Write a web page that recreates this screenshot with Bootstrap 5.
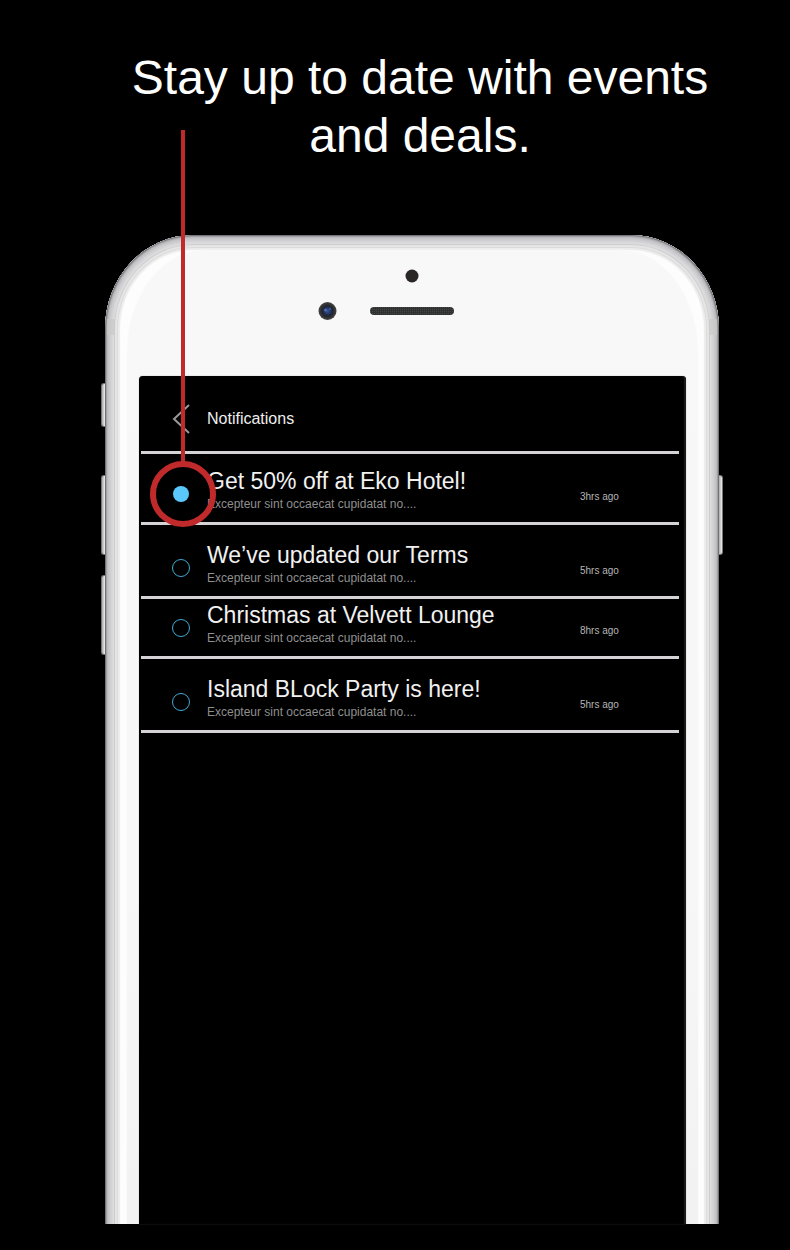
<!DOCTYPE html>
<html lang="en">
<head>
<meta charset="utf-8">
<meta name="viewport" content="width=device-width, initial-scale=1">
<title>Notifications</title>
<link href="https://cdn.jsdelivr.net/npm/bootstrap@5.3.0/dist/css/bootstrap.min.css" rel="stylesheet">
<style>
  body { background: #000; color: #fff; font-family: "Liberation Sans", Arial, sans-serif; }
  .headline { font-size: 48px; line-height: 58px; padding: 49px 0 0 50px; margin-bottom: 70px; }
  .headline span { display: block; }
  .stage { padding: 0 71px 26px 105px; }

  /* phone body */
  .phone { padding: 141px 33px 0 34px; }
  .shell { inset: 0; }
  .shell-rim {
    inset: 0 0 -60px 0;
    border-radius: 88px 88px 0 0 / 94px 94px 0 0;
    background: #fdfdfd;
    box-shadow:
      inset 0 0 2px 1px #5c5c60,
      inset 0 0 4px 4px #b9b9bd,
      inset 0 0 3px 7px #d6d6d9,
      inset 0 0 0 9px #dedee0,
      inset 0 0 0 10px #cdcfcf,
      inset 0 0 0 12px #e5e5e6,
      inset 0 0 0 13px #dcdcdd,
      inset 0 0 1px 15px #ececec;
  }
  .shell-face {
    inset: 15px 21px -60px 22px;
    border-radius: 78px 78px 0 0 / 104px 104px 0 0;
    background: linear-gradient(#f8f8f8, #f7f7f7 60%, #f1f1f1);
    box-shadow: 0 0 2px #f8f8f8;
  }
  .antenna { top: 84px; width: 8px; height: 16px; background: #c9c9c8; opacity: .7; }
  .antenna-l { left: 2px; }
  .antenna-r { right: 2px; }
  .side-key {
    width: 4px; border: 1px solid #77777a; border-radius: 3px 0 0 3px;
    background: linear-gradient(90deg, #aaa, #efefef);
  }
  .key-l { left: -4px; border-right: 0; }
  .key-r { right: -4px; border-left: 0; border-radius: 0 3px 3px 0; }
  .key-mute { top: 148px; height: 44px; }
  .key-up { top: 240px; height: 80px; }
  .key-down { top: 340px; height: 80px; }
  .sensors { inset: 32px 0 auto 0; height: 56px; }

  /* screen */
  .screen {
    background: #000; border-radius: 4px 4px 0 0; padding: 0 7px 0 2px;
    box-shadow: inset -2px 0 1px #1d1d1c, 0 0 1px #777;
  }
  .topbar { height: 75px; padding: 10px 0 0 31px; gap: 16px; }
  .back { width: 19px; height: 30px; color: #999; background: none; border: 0; }
  .topbar h2 { font-size: 16px; line-height: 20px; margin: 0; color: #eee; font-weight: 400; }
  .notice-list { border-top: 3px solid #d5d3d5; }
  .notice { border-bottom: 3px solid #d5d3d5; padding: 13px 0 9px 31px; }
  .notice-roomy { padding-top: 16px; }
  .notice-tight { padding-top: 2px; }
  .notice h3 { font-size: 23px; line-height: 28px; margin: 0; color: #f1f1f1; font-weight: 400; }
  .notice p { font-size: 12px; line-height: 18px; margin: 0; color: #8f8f8f; }
  .notice time { font-size: 10px; line-height: 12px; color: #b5b5b5; width: 99px; padding-top: 24px; }
  .dot { width: 18px; height: 18px; border: 1px solid #43a8d4; margin: 18px 17px 0 0; }
  .dot-new { width: 16px; height: 16px; background: #5ac8fa; border: 0; margin: 19px 18px 0 1px; }

  /* callout */
  .callout { width: 66px; height: 66px; border: 6px solid #c12a2a; left: -23px; top: -25px; z-index: 2; }
  .callout::before {
    content: ""; width: 4px; height: 333px; background: #c12a2a;
    position: absolute; left: 25px; bottom: 58px;
  }
</style>
</head>
<body>
<main class="min-vh-100 d-flex flex-column">
  <h1 class="headline text-center fw-normal"><span>Stay up to date with events</span><span>and deals.</span></h1>
  <div class="stage flex-grow-1 d-flex">
    <div class="phone position-relative flex-grow-1 d-flex">
      <div class="side-key key-l key-mute position-absolute"></div>
      <div class="side-key key-l key-up position-absolute"></div>
      <div class="side-key key-l key-down position-absolute"></div>
      <div class="side-key key-r key-up position-absolute"></div>
      <div class="shell position-absolute overflow-hidden">
        <div class="shell-rim position-absolute"></div>
        <div class="shell-face position-absolute"></div>
        <div class="antenna antenna-l position-absolute"></div>
        <div class="antenna antenna-r position-absolute"></div>
        <div class="sensors position-absolute d-flex justify-content-center">
          <svg width="240" height="56" viewBox="0 0 240 56" aria-hidden="true">
            <defs>
              <radialGradient id="lens"><stop offset="0" stop-color="#38569b"/><stop offset=".45" stop-color="#1d2b50"/><stop offset=".6" stop-color="#25262a"/><stop offset="1" stop-color="#454545"/></radialGradient>
              <pattern id="mesh" width="2" height="2" patternUnits="userSpaceOnUse"><rect width="2" height="2" fill="#303231"/><rect width="1" height="1" fill="#454746"/></pattern>
            </defs>
            <circle cx="120" cy="9" r="6.5" fill="#292625"/>
            <circle cx="35.500" cy="44" r="9" fill="url(#lens)"/>
            <circle cx="33.500" cy="43" r="1.500" fill="#4b6db4"/>
            <circle cx="38" cy="42" r="1" fill="#48639f"/>
            <rect x="78" y="40" width="84" height="8" rx="4" fill="url(#mesh)"/>
          </svg>
        </div>
      </div>
      <section class="screen position-relative flex-grow-1">
        <header class="topbar d-flex align-items-center">
          <button type="button" class="back p-0 d-flex" aria-label="Back">
            <svg width="19" height="30" viewBox="0 0 19 30" fill="none" stroke="currentColor" stroke-width="2"><path d="M17 1 2 15 17 29"/></svg>
          </button>
          <h2>Notifications</h2>
        </header>
        <ul class="notice-list list-unstyled m-0">
          <li class="notice d-flex">
            <div class="dot dot-new rounded-circle flex-shrink-0 position-relative"><span class="callout position-absolute rounded-circle"></span></div>
            <div class="flex-grow-1"><h3>Get 50% off at Eko Hotel!</h3><p>Excepteur sint occaecat cupidatat no....</p></div>
            <time>3hrs ago</time>
          </li>
          <li class="notice notice-roomy d-flex">
            <div class="dot rounded-circle flex-shrink-0"></div>
            <div class="flex-grow-1"><h3>We’ve updated our Terms</h3><p>Excepteur sint occaecat cupidatat no....</p></div>
            <time>5hrs ago</time>
          </li>
          <li class="notice notice-tight d-flex">
            <div class="dot rounded-circle flex-shrink-0"></div>
            <div class="flex-grow-1"><h3>Christmas at Velvett Lounge</h3><p>Excepteur sint occaecat cupidatat no....</p></div>
            <time>8hrs ago</time>
          </li>
          <li class="notice notice-roomy d-flex">
            <div class="dot rounded-circle flex-shrink-0"></div>
            <div class="flex-grow-1"><h3>Island BLock Party is here!</h3><p>Excepteur sint occaecat cupidatat no....</p></div>
            <time>5hrs ago</time>
          </li>
        </ul>
      </section>
    </div>
  </div>
</main>
<script src="https://cdn.jsdelivr.net/npm/bootstrap@5.3.0/dist/js/bootstrap.bundle.min.js"></script>
</body>
</html>
